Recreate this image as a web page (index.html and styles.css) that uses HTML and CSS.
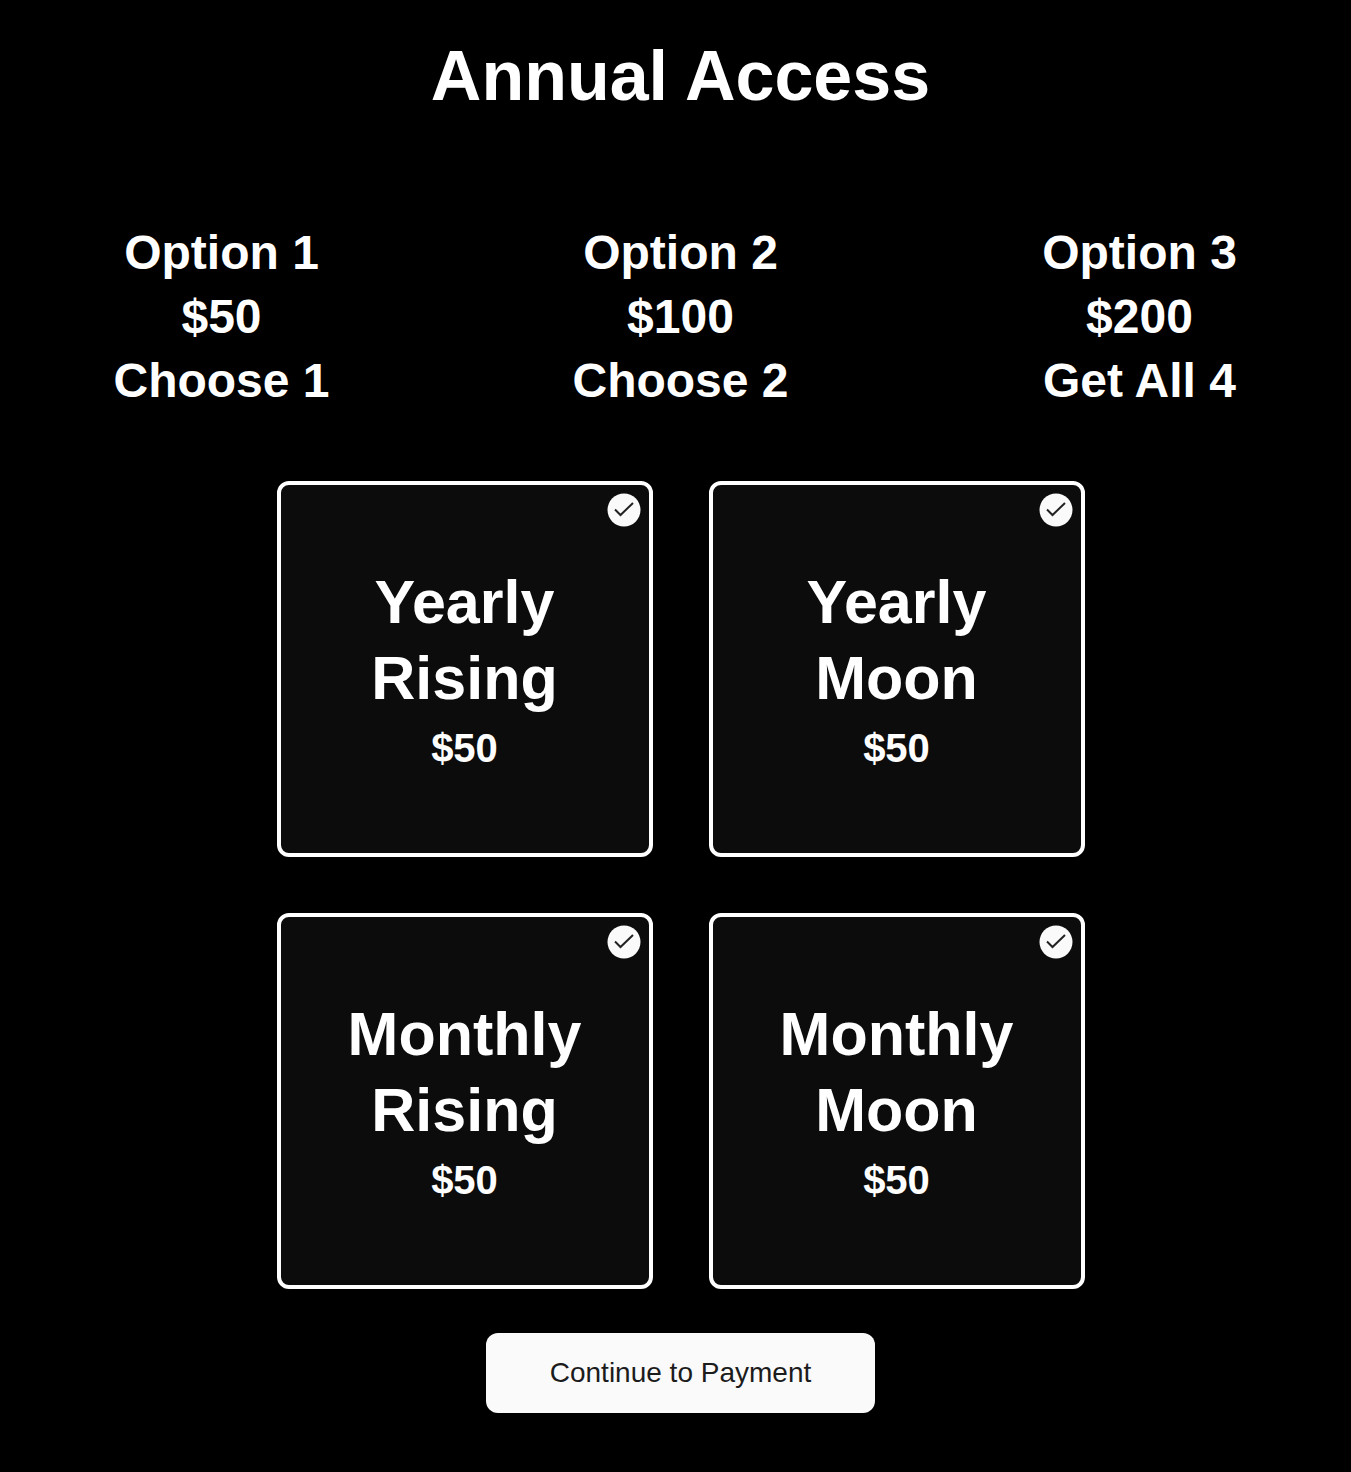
FILE: index.html
```html
<!DOCTYPE html>
<html lang="en">
<head>
    <meta charset="UTF-8">
    <title>Annual Access</title>
    <link rel="stylesheet" href="styles.css">
</head>
<body>
    <h1>Annual Access</h1>
    <div class="options">
        <p>Option 1<br>$50<br>Choose 1</p>
        <p>Option 2<br>$100<br>Choose 2</p>
        <p>Option 3<br>$200<br>Get All 4</p>
    </div>
    <form class="plans">
        <div class="grid">
            <label class="card">
                <input type="checkbox" name="plan" value="yearly-rising" checked>
                <svg class="tick" viewBox="0 0 34 34"><circle cx="17" cy="17" r="16.5"/><path d="M8 16.5l5.5 5.5L26 10"/></svg>
                <span class="name">Yearly Rising</span>
                <span class="price">$50</span>
            </label>
            <label class="card">
                <input type="checkbox" name="plan" value="yearly-moon" checked>
                <svg class="tick" viewBox="0 0 34 34"><circle cx="17" cy="17" r="16.5"/><path d="M8 16.5l5.5 5.5L26 10"/></svg>
                <span class="name">Yearly Moon</span>
                <span class="price">$50</span>
            </label>
            <label class="card">
                <input type="checkbox" name="plan" value="monthly-rising" checked>
                <svg class="tick" viewBox="0 0 34 34"><circle cx="17" cy="17" r="16.5"/><path d="M8 16.5l5.5 5.5L26 10"/></svg>
                <span class="name">Monthly Rising</span>
                <span class="price">$50</span>
            </label>
            <label class="card">
                <input type="checkbox" name="plan" value="monthly-moon" checked>
                <svg class="tick" viewBox="0 0 34 34"><circle cx="17" cy="17" r="16.5"/><path d="M8 16.5l5.5 5.5L26 10"/></svg>
                <span class="name">Monthly Moon</span>
                <span class="price">$50</span>
            </label>
        </div>
        <button type="submit">Continue to Payment</button>
    </form>
</body>
</html>
```
FILE: styles.css
```css
*{
    margin: 0;
    padding: 0;
    box-sizing: border-box;
}
body{
    padding: 32px 0 58px 10px;
    background-color: #000;
    color: #fff;
    font-family: "Liberation Sans", Arial, sans-serif;
    text-align: center;
}
h1{
    font-size: 70px;
    line-height: 88px;
}
.options{
    display: grid;
    grid-template-columns: repeat(3, 1fr);
    gap: 36px;
    margin: 101px 0 68px;
    font-size: 48px;
    font-weight: bold;
    line-height: 64px;
}
.plans{
    display: flex;
    flex-direction: column;
    align-items: center;
    gap: 44px;
}
.grid{
    display: grid;
    grid-template-columns: repeat(2, 376px);
    gap: 56px;
}
.card{
    position: relative;
    display: flex;
    flex-direction: column;
    align-items: center;
    justify-content: center;
    aspect-ratio: 1;
    padding: 6px 48px 0;
    border: 4px solid #fff;
    border-radius: 12px;
    background-color: #0c0c0c;
    font-weight: bold;
    cursor: pointer;
}
.card input{
    position: absolute;
    top: 8px;
    right: 8px;
    width: 34px;
    height: 34px;
    opacity: 0;
}
.tick{
    position: absolute;
    top: 8px;
    right: 8px;
    width: 34px;
    height: 34px;
    fill: #fafafa;
    visibility: hidden;
}
.tick path{
    fill: none;
    stroke: #222;
    stroke-width: 2;
}
input:checked + .tick{
    visibility: visible;
}
.name{
    font-size: 61px;
    line-height: 76px;
}
.price{
    font-size: 40px;
    line-height: 64px;
}
button{
    padding: 24px 64px;
    border: 0;
    border-radius: 12px;
    background-color: #fafafa;
    color: #1c1c1c;
    font-family: inherit;
    font-size: 28px;
    line-height: 32px;
    cursor: pointer;
}
```
